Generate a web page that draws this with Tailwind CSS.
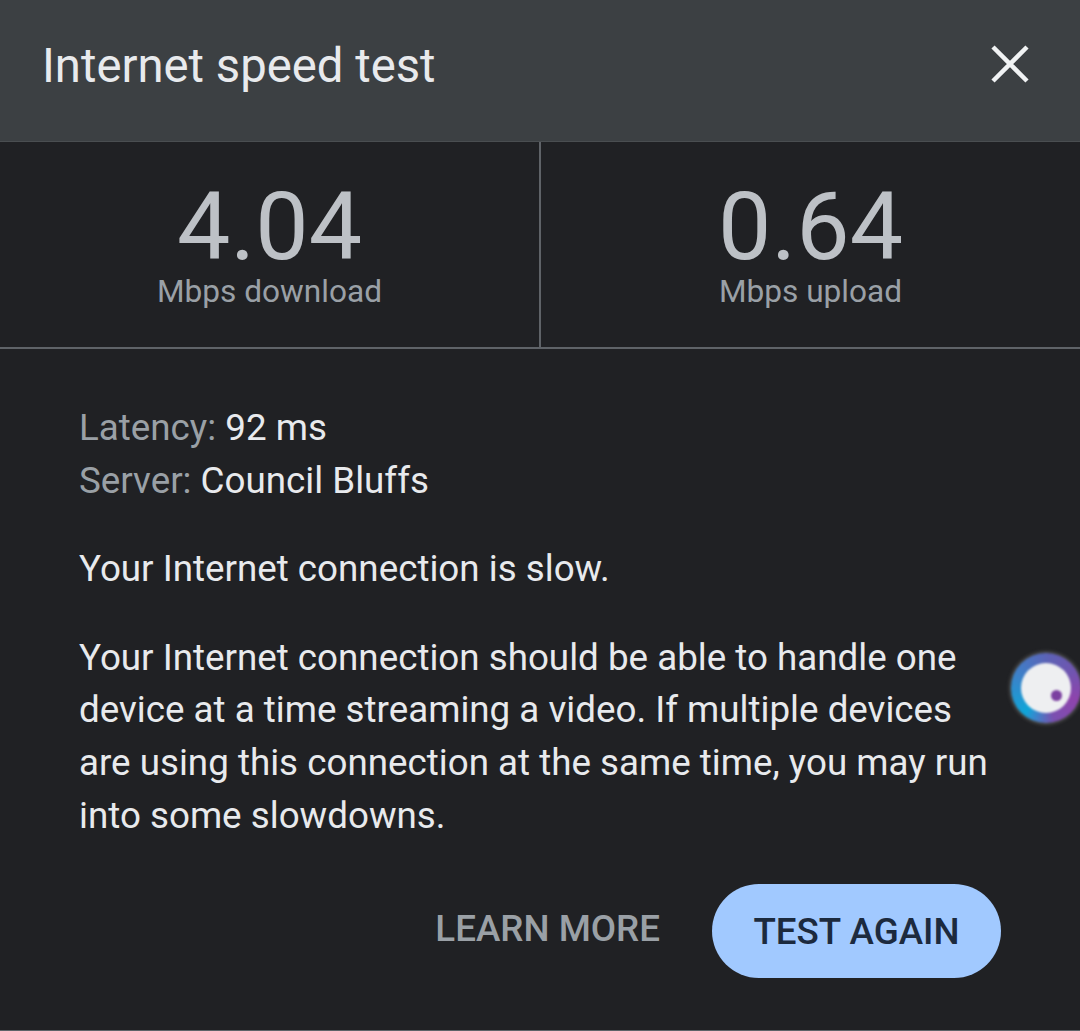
<!DOCTYPE html>
<html lang="en">
<head>
    <title>Internet speed test</title>
    <script src="https://cdn.jsdelivr.net/npm/@tailwindcss/browser@4"></script>
</head>
<body class="bg-[#202124] font-['Roboto',sans-serif]">
<div class="relative w-[1080px] h-[1031px] overflow-hidden flex flex-col border-b border-[#5f6368]">
    <!-- Header -->
    <div class="h-[142px] shrink-0 bg-[#3c4043] border-b border-[#4a4e51] flex items-center justify-between pl-[42px] pr-[51px] pb-[11px]">
        <h1 class="text-[47.25px] leading-[56px] text-[#e8eaed] font-normal mt-[2px]">Internet speed test</h1>
        <svg class="w-[38px] h-[38px] mb-[3px]" viewBox="0 0 38 38" fill="none" stroke="#f1f3f4" stroke-width="4.5">
            <path d="M2 2 L36 36 M36 2 L2 36"/>
        </svg>
    </div>

    <!-- Results -->
    <div class="h-[207px] shrink-0 grid grid-cols-[539px_541px] border-b-2 border-[#5f6368]">
        <div class="flex flex-col items-center pt-[47px]">
            <div class="text-[95px] leading-[76px] text-[#bdc1c6]">4.04</div>
            <div class="mt-[9px] text-[31.6px] leading-[36px] text-[#9aa0a6]">Mbps download</div>
        </div>
        <div class="border-l-2 border-[#5f6368] flex flex-col items-center pt-[47px]">
            <div class="text-[95px] leading-[76px] text-[#bdc1c6]">0.64</div>
            <div class="mt-[9px] text-[31.6px] leading-[36px] text-[#9aa0a6]">Mbps upload</div>
        </div>
    </div>

    <!-- Details -->
    <div class="px-[79px] pt-[53px] text-[36.75px] leading-[52.6px] text-[#e8eaed]">
        <div><span class="text-[#9aa0a6]">Latency:</span> 92 ms</div>
        <div><span class="text-[#9aa0a6]">Server:</span> Council Bluffs</div>
        <p class="mt-[36px]">Your Internet connection is slow.</p>
        <p class="mt-[36px]">Your Internet connection should be able to handle one device at a time streaming a video. If multiple devices are using this connection at the same time, you may run into some slowdowns.</p>
    </div>

    <!-- Actions -->
    <div class="flex items-center justify-end gap-[52px] pr-[79px] mt-[42px]">
        <button class="text-[36.75px] font-medium text-[#9aa0a6] mb-[5px]">LEARN MORE</button>
        <button class="h-[94px] w-[289px] rounded-[47px] bg-[#a1c9ff] text-[36.75px] font-medium text-[#1c2a3e]">TEST AGAIN</button>
    </div>

    <!-- Floating assistant bubble -->
    <div class="absolute left-[1011px] top-[653px] w-[70px] h-[70px] rounded-full bg-[conic-gradient(from_220deg,#0fa5d8,#3f7fc8_22%,#5d62b5_40%,#7055b0_55%,#8e44ad_70%,#7a50b0_85%,#2f8fd0_96%,#0fa5d8)] blur-[1px] shadow-[0_0_4px_rgba(210,210,200,0.6)] flex items-center justify-center">
        <div class="relative w-[50px] h-[50px] rounded-full bg-[#eeeff1]">
            <div class="absolute left-[30px] top-[27px] w-[11px] h-[11px] rounded-full bg-[#7b3fa0]"></div>
        </div>
    </div>
</div>
</body>
</html>
